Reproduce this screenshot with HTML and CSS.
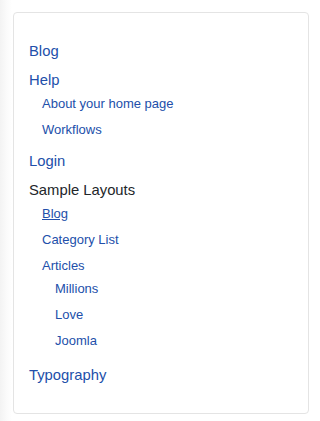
FILE: index.html
```html
<!DOCTYPE html>
<html lang="en">
<head>
<meta charset="utf-8">
<title>Menu</title>
<link rel="stylesheet" href="styles.css">
</head>
<body>
<div class="card">
  <ul class="menu">
    <li class="top"><a href="#">Blog</a></li>
    <li class="top"><a href="#">Help</a>
      <ul class="sub">
        <li><a href="#">About your home page</a></li>
        <li><a href="#">Workflows</a></li>
      </ul>
    </li>
    <li class="top"><a href="#">Login</a></li>
    <li class="top"><span class="heading">Sample Layouts</span>
      <ul class="sub">
        <li><a href="#" class="active">Blog</a></li>
        <li><a href="#">Category List</a></li>
        <li><a href="#">Articles</a>
          <ul class="sub">
            <li><a href="#">Millions</a></li>
            <li><a href="#">Love</a></li>
            <li><a href="#">Joomla</a></li>
          </ul>
        </li>
      </ul>
    </li>
    <li class="top"><a href="#">Typography</a></li>
  </ul>
</div>
</body>
</html>
```
FILE: styles.css
```css
html, body {
  height: 100%;
}
body {
  margin: 0;
  padding: 12px 11px 0 13px;
  box-sizing: border-box;
  background: linear-gradient(to right, #f3f3f3 0px, #fafafa 6px, #ffffff 12px);
  font-family: "Liberation Sans", Arial, sans-serif;
  color: #22262a;
}
.card {
  background: #fff;
  border: 1px solid #e4e4e4;
  border-radius: 4px;
  padding: 23.5px 14px 23.5px 15px;
}
.menu, .sub {
  list-style: none;
  margin: 0;
  padding: 0;
}
.sub {
  padding-left: 13px;
}
.top {
  padding: 3.5px 0;
  font-size: 14.8px;
  line-height: 22px;
}
.sub li {
  padding: 3px 0;
  font-size: 13px;
  line-height: 20px;
}
a {
  color: #224faa;
  text-decoration: none;
}
a.active {
  text-decoration: underline;
}
.heading {
  color: #22262a;
}
```
